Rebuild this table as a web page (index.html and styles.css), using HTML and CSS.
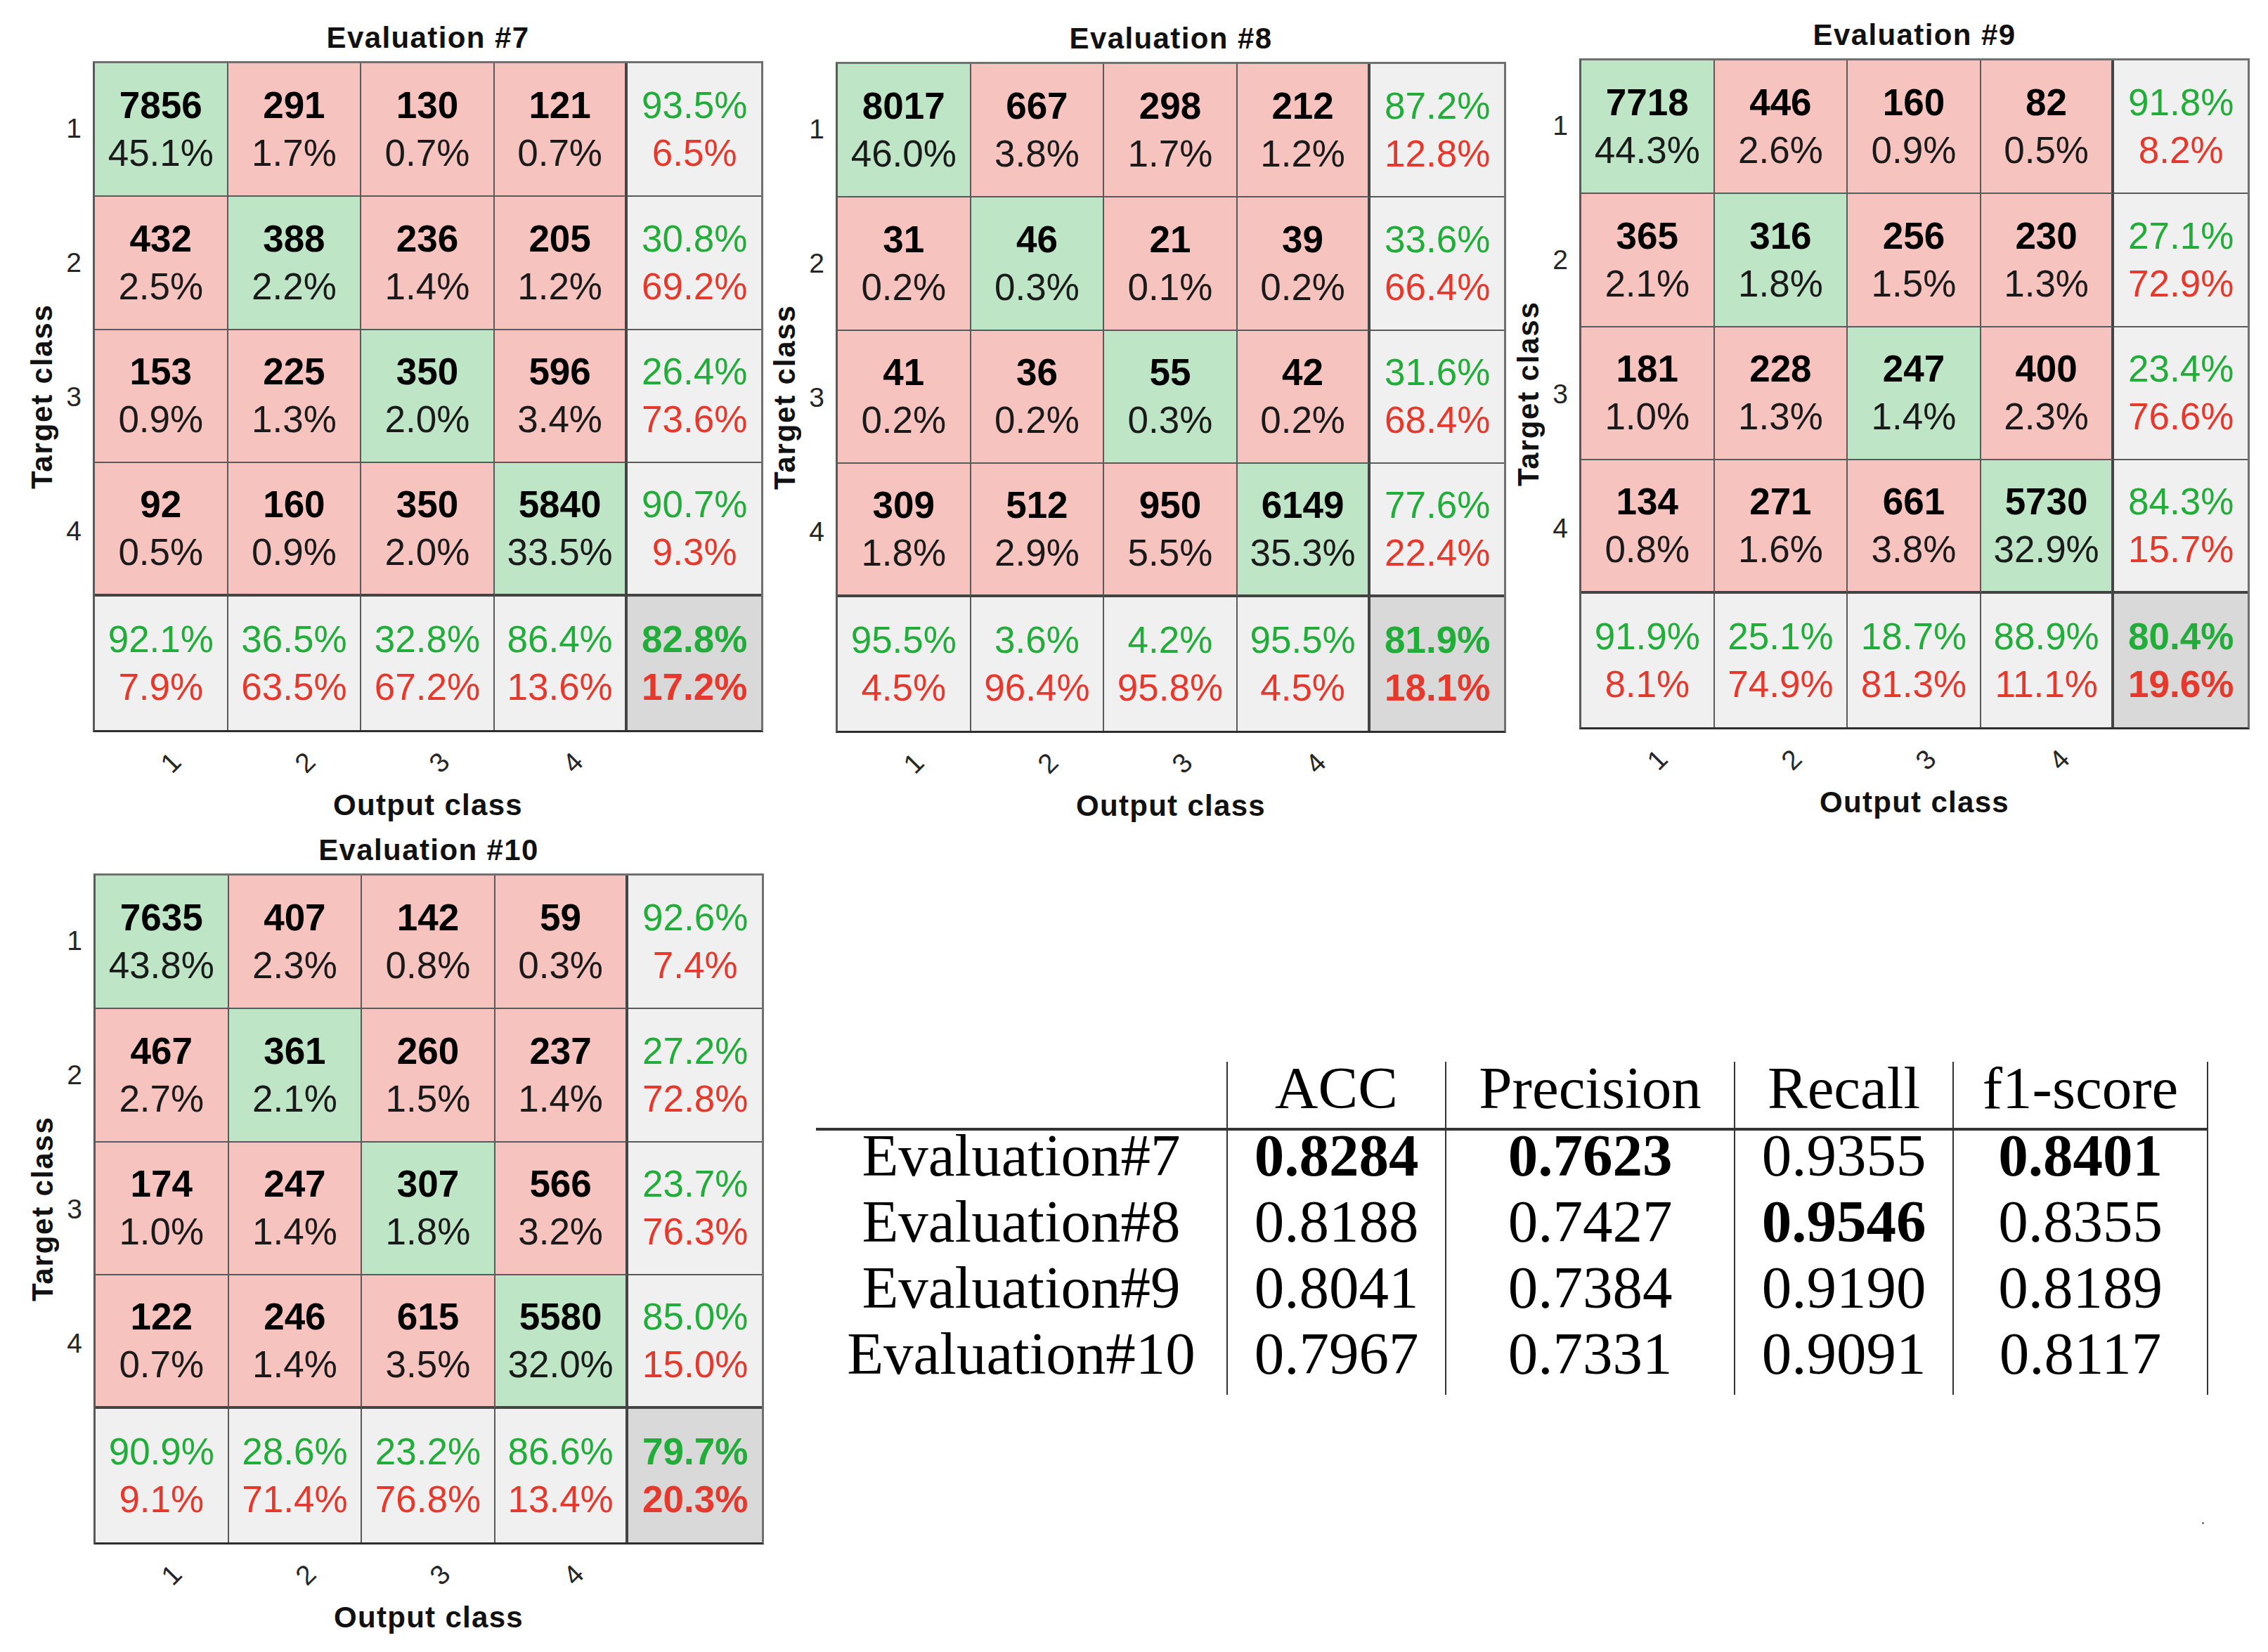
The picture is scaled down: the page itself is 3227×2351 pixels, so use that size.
FILE: index.html
```html
<!DOCTYPE html>
<html>
<head>
<meta charset="utf-8">
<link rel="stylesheet" href="styles.css">
</head>
<body>
<div class="page">
  <div class="toprow">
    <div class="chart c7">
      <div class="title">Evaluation #7</div>
      <div class="body">
        <div class="ylabel">Target class</div>
        <div class="rowlabels"><div>1</div><div>2</div><div>3</div><div>4</div><div></div></div>
        <div class="matrix">
          <div class="cell g"><b>7856</b><span>45.1%</span></div>
          <div class="cell r"><b>291</b><span>1.7%</span></div>
          <div class="cell r"><b>130</b><span>0.7%</span></div>
          <div class="cell r"><b>121</b><span>0.7%</span></div>
          <div class="cell s"><i>93.5%</i><em>6.5%</em></div>
          <div class="cell r"><b>432</b><span>2.5%</span></div>
          <div class="cell g"><b>388</b><span>2.2%</span></div>
          <div class="cell r"><b>236</b><span>1.4%</span></div>
          <div class="cell r"><b>205</b><span>1.2%</span></div>
          <div class="cell s"><i>30.8%</i><em>69.2%</em></div>
          <div class="cell r"><b>153</b><span>0.9%</span></div>
          <div class="cell r"><b>225</b><span>1.3%</span></div>
          <div class="cell g"><b>350</b><span>2.0%</span></div>
          <div class="cell r"><b>596</b><span>3.4%</span></div>
          <div class="cell s"><i>26.4%</i><em>73.6%</em></div>
          <div class="cell r"><b>92</b><span>0.5%</span></div>
          <div class="cell r"><b>160</b><span>0.9%</span></div>
          <div class="cell r"><b>350</b><span>2.0%</span></div>
          <div class="cell g"><b>5840</b><span>33.5%</span></div>
          <div class="cell s"><i>90.7%</i><em>9.3%</em></div>
          <div class="cell s"><i>92.1%</i><em>7.9%</em></div>
          <div class="cell s"><i>36.5%</i><em>63.5%</em></div>
          <div class="cell s"><i>32.8%</i><em>67.2%</em></div>
          <div class="cell s"><i>86.4%</i><em>13.6%</em></div>
          <div class="cell t"><i>82.8%</i><em>17.2%</em></div>
        </div>
      </div>
      <div class="xticks"><span>1</span><span>2</span><span>3</span><span>4</span><span></span></div>
      <div class="xlabel">Output class</div>
    </div>

    <div class="chart c8">
      <div class="title">Evaluation #8</div>
      <div class="body">
        <div class="ylabel">Target class</div>
        <div class="rowlabels"><div>1</div><div>2</div><div>3</div><div>4</div><div></div></div>
        <div class="matrix">
          <div class="cell g"><b>8017</b><span>46.0%</span></div>
          <div class="cell r"><b>667</b><span>3.8%</span></div>
          <div class="cell r"><b>298</b><span>1.7%</span></div>
          <div class="cell r"><b>212</b><span>1.2%</span></div>
          <div class="cell s"><i>87.2%</i><em>12.8%</em></div>
          <div class="cell r"><b>31</b><span>0.2%</span></div>
          <div class="cell g"><b>46</b><span>0.3%</span></div>
          <div class="cell r"><b>21</b><span>0.1%</span></div>
          <div class="cell r"><b>39</b><span>0.2%</span></div>
          <div class="cell s"><i>33.6%</i><em>66.4%</em></div>
          <div class="cell r"><b>41</b><span>0.2%</span></div>
          <div class="cell r"><b>36</b><span>0.2%</span></div>
          <div class="cell g"><b>55</b><span>0.3%</span></div>
          <div class="cell r"><b>42</b><span>0.2%</span></div>
          <div class="cell s"><i>31.6%</i><em>68.4%</em></div>
          <div class="cell r"><b>309</b><span>1.8%</span></div>
          <div class="cell r"><b>512</b><span>2.9%</span></div>
          <div class="cell r"><b>950</b><span>5.5%</span></div>
          <div class="cell g"><b>6149</b><span>35.3%</span></div>
          <div class="cell s"><i>77.6%</i><em>22.4%</em></div>
          <div class="cell s"><i>95.5%</i><em>4.5%</em></div>
          <div class="cell s"><i>3.6%</i><em>96.4%</em></div>
          <div class="cell s"><i>4.2%</i><em>95.8%</em></div>
          <div class="cell s"><i>95.5%</i><em>4.5%</em></div>
          <div class="cell t"><i>81.9%</i><em>18.1%</em></div>
        </div>
      </div>
      <div class="xticks"><span>1</span><span>2</span><span>3</span><span>4</span><span></span></div>
      <div class="xlabel">Output class</div>
    </div>

    <div class="chart c9">
      <div class="title">Evaluation #9</div>
      <div class="body">
        <div class="ylabel">Target class</div>
        <div class="rowlabels"><div>1</div><div>2</div><div>3</div><div>4</div><div></div></div>
        <div class="matrix">
          <div class="cell g"><b>7718</b><span>44.3%</span></div>
          <div class="cell r"><b>446</b><span>2.6%</span></div>
          <div class="cell r"><b>160</b><span>0.9%</span></div>
          <div class="cell r"><b>82</b><span>0.5%</span></div>
          <div class="cell s"><i>91.8%</i><em>8.2%</em></div>
          <div class="cell r"><b>365</b><span>2.1%</span></div>
          <div class="cell g"><b>316</b><span>1.8%</span></div>
          <div class="cell r"><b>256</b><span>1.5%</span></div>
          <div class="cell r"><b>230</b><span>1.3%</span></div>
          <div class="cell s"><i>27.1%</i><em>72.9%</em></div>
          <div class="cell r"><b>181</b><span>1.0%</span></div>
          <div class="cell r"><b>228</b><span>1.3%</span></div>
          <div class="cell g"><b>247</b><span>1.4%</span></div>
          <div class="cell r"><b>400</b><span>2.3%</span></div>
          <div class="cell s"><i>23.4%</i><em>76.6%</em></div>
          <div class="cell r"><b>134</b><span>0.8%</span></div>
          <div class="cell r"><b>271</b><span>1.6%</span></div>
          <div class="cell r"><b>661</b><span>3.8%</span></div>
          <div class="cell g"><b>5730</b><span>32.9%</span></div>
          <div class="cell s"><i>84.3%</i><em>15.7%</em></div>
          <div class="cell s"><i>91.9%</i><em>8.1%</em></div>
          <div class="cell s"><i>25.1%</i><em>74.9%</em></div>
          <div class="cell s"><i>18.7%</i><em>81.3%</em></div>
          <div class="cell s"><i>88.9%</i><em>11.1%</em></div>
          <div class="cell t"><i>80.4%</i><em>19.6%</em></div>
        </div>
      </div>
      <div class="xticks"><span>1</span><span>2</span><span>3</span><span>4</span><span></span></div>
      <div class="xlabel">Output class</div>
    </div>
  </div>

  <div class="bottomrow">
    <div class="chart c10">
      <div class="title">Evaluation #10</div>
      <div class="body">
        <div class="ylabel">Target class</div>
        <div class="rowlabels"><div>1</div><div>2</div><div>3</div><div>4</div><div></div></div>
        <div class="matrix">
          <div class="cell g"><b>7635</b><span>43.8%</span></div>
          <div class="cell r"><b>407</b><span>2.3%</span></div>
          <div class="cell r"><b>142</b><span>0.8%</span></div>
          <div class="cell r"><b>59</b><span>0.3%</span></div>
          <div class="cell s"><i>92.6%</i><em>7.4%</em></div>
          <div class="cell r"><b>467</b><span>2.7%</span></div>
          <div class="cell g"><b>361</b><span>2.1%</span></div>
          <div class="cell r"><b>260</b><span>1.5%</span></div>
          <div class="cell r"><b>237</b><span>1.4%</span></div>
          <div class="cell s"><i>27.2%</i><em>72.8%</em></div>
          <div class="cell r"><b>174</b><span>1.0%</span></div>
          <div class="cell r"><b>247</b><span>1.4%</span></div>
          <div class="cell g"><b>307</b><span>1.8%</span></div>
          <div class="cell r"><b>566</b><span>3.2%</span></div>
          <div class="cell s"><i>23.7%</i><em>76.3%</em></div>
          <div class="cell r"><b>122</b><span>0.7%</span></div>
          <div class="cell r"><b>246</b><span>1.4%</span></div>
          <div class="cell r"><b>615</b><span>3.5%</span></div>
          <div class="cell g"><b>5580</b><span>32.0%</span></div>
          <div class="cell s"><i>85.0%</i><em>15.0%</em></div>
          <div class="cell s"><i>90.9%</i><em>9.1%</em></div>
          <div class="cell s"><i>28.6%</i><em>71.4%</em></div>
          <div class="cell s"><i>23.2%</i><em>76.8%</em></div>
          <div class="cell s"><i>86.6%</i><em>13.4%</em></div>
          <div class="cell t"><i>79.7%</i><em>20.3%</em></div>
        </div>
      </div>
      <div class="xticks"><span>1</span><span>2</span><span>3</span><span>4</span><span></span></div>
      <div class="xlabel">Output class</div>
    </div>

    <table class="results">
      <thead>
        <tr><th></th><th>ACC</th><th>Precision</th><th>Recall</th><th>f1-score</th></tr>
      </thead>
      <tbody>
        <tr><td>Evaluation#7</td><td><strong>0.8284</strong></td><td><strong>0.7623</strong></td><td>0.9355</td><td><strong>0.8401</strong></td></tr>
        <tr><td>Evaluation#8</td><td>0.8188</td><td>0.7427</td><td><strong>0.9546</strong></td><td>0.8355</td></tr>
        <tr><td>Evaluation#9</td><td>0.8041</td><td>0.7384</td><td>0.9190</td><td>0.8189</td></tr>
        <tr><td>Evaluation#10</td><td>0.7967</td><td>0.7331</td><td>0.9091</td><td>0.8117</td></tr>
      </tbody>
    </table>
  </div>
  <div class="speck"></div>
</div>
</body>
</html>
```
FILE: styles.css
```css
html, body {
  margin: 0;
  padding: 0;
  background: #ffffff;
}

.page {
  position: relative;
  width: 3227px;
  height: 2351px;
  overflow: hidden;
  font-family: "Liberation Sans", Arial, sans-serif;
  color: #000;
}

.toprow {
  display: flex;
  align-items: flex-start;
  padding-top: 25px;
  padding-left: 32px;
  gap: 3px;
}

.bottomrow {
  display: flex;
  align-items: flex-start;
  padding-left: 33px;
  margin-top: 13px;
}

.chart {
  display: flex;
  flex-direction: column;
  width: 1054px;
  flex: none;
}

.c7 { margin-top: 4px; }
.c8 { margin-top: 5px; }
.c9 { margin-top: 0; margin-left: 1px; }

.title {
  margin-left: 100px;
  width: 954px;
  height: 50px;
  line-height: 50px;
  margin-bottom: 8px;
  text-align: center;
  font-weight: bold;
  font-size: 42px;
  letter-spacing: 1.4px;
  color: #111;
  white-space: nowrap;
}

.body {
  display: flex;
  align-items: stretch;
}

.ylabel {
  margin-left: 8px;
  width: 40px;
  display: flex;
  align-items: center;
  justify-content: center;
  writing-mode: vertical-rl;
  transform: rotate(180deg);
  font-weight: bold;
  font-size: 42px;
  letter-spacing: 1.8px;
  line-height: 40px;
  color: #111;
  white-space: nowrap;
}

.rowlabels {
  width: 36px;
  margin-right: 16px;
  display: grid;
  grid-template-rows: repeat(5, 1fr);
  font-size: 39px;
  color: #262626;
}

.rowlabels div {
  display: flex;
  align-items: center;
  justify-content: flex-end;
}

.matrix {
  box-sizing: border-box;
  width: 954px;
  height: 955px;
  display: grid;
  grid-template-columns: repeat(5, 1fr);
  grid-template-rows: repeat(5, 1fr);
  border: 3px solid #707070;
  border-bottom-color: #2e2e2e;
  border-left-color: #5a5a5a;
}

.cell {
  box-sizing: border-box;
  display: flex;
  flex-direction: column;
  align-items: center;
  justify-content: center;
  border-right: 2px solid #5a5a5a;
  border-bottom: 2px solid #5a5a5a;
  font-size: 53px;
  line-height: 68px;
  white-space: nowrap;
}

.cell:nth-child(5n+4) { border-right: 4px solid #444; }
.cell:nth-child(5n) { border-right: none; }
.cell:nth-child(n+16):nth-child(-n+20) { border-bottom: 4px solid #444; }
.cell:nth-child(n+21) { border-bottom: none; }

.cell b { font-weight: bold; color: #000; }
.cell span { color: #1a1a1a; }
.cell i { font-style: normal; color: #22ad3b; }
.cell em { font-style: normal; color: #e4392c; }

.g { background: #bde5c6; }
.r { background: #f7c3bf; }
.s { background: #f0f0f0; }
.t { background: #d9d9d9; }
.t i, .t em { font-weight: bold; }

.xticks {
  margin-left: 100px;
  width: 954px;
  height: 79px;
  display: grid;
  grid-template-columns: repeat(5, 1fr);
  font-size: 39px;
  color: #262626;
}

.xticks span {
  display: block;
  text-align: center;
  padding-top: 25px;
  line-height: 40px;
  transform: translateX(12px) rotate(-45deg);
}

.xlabel {
  margin-left: 100px;
  width: 954px;
  height: 50px;
  line-height: 50px;
  text-align: center;
  font-weight: bold;
  font-size: 42px;
  letter-spacing: 1.3px;
  color: #111;
  white-space: nowrap;
}

.results {
  margin-left: 74px;
  margin-top: 326px;
  border-collapse: collapse;
  font-family: "Liberation Serif", "Times New Roman", serif;
  font-size: 85px;
  color: #000;
}

.results th, .results td {
  padding: 0;
  text-align: center;
  font-weight: normal;
  white-space: nowrap;
  border-right: 2px solid #333;
}

.results th:first-child, .results td:first-child { width: 585px; }
.results th:nth-child(2), .results td:nth-child(2) { width: 311px; }
.results th:nth-child(3), .results td:nth-child(3) { width: 411px; }
.results th:nth-child(4), .results td:nth-child(4) { width: 311px; }
.results th:nth-child(5), .results td:nth-child(5) { width: 362px; }

.results th {
  height: 94px;
  box-sizing: border-box;
  padding-bottom: 20px;
  line-height: 74px;
  vertical-align: middle;
  border-bottom: 4px solid #333;
}

.results td {
  height: 94px;
  box-sizing: border-box;
  padding-bottom: 24px;
  line-height: 70px;
  vertical-align: middle;
}

.results strong { font-weight: bold; }

.speck {
  position: absolute;
  left: 3133px;
  top: 2166px;
  width: 3px;
  height: 3px;
  background: #666;
  border-radius: 50%;
}
```
